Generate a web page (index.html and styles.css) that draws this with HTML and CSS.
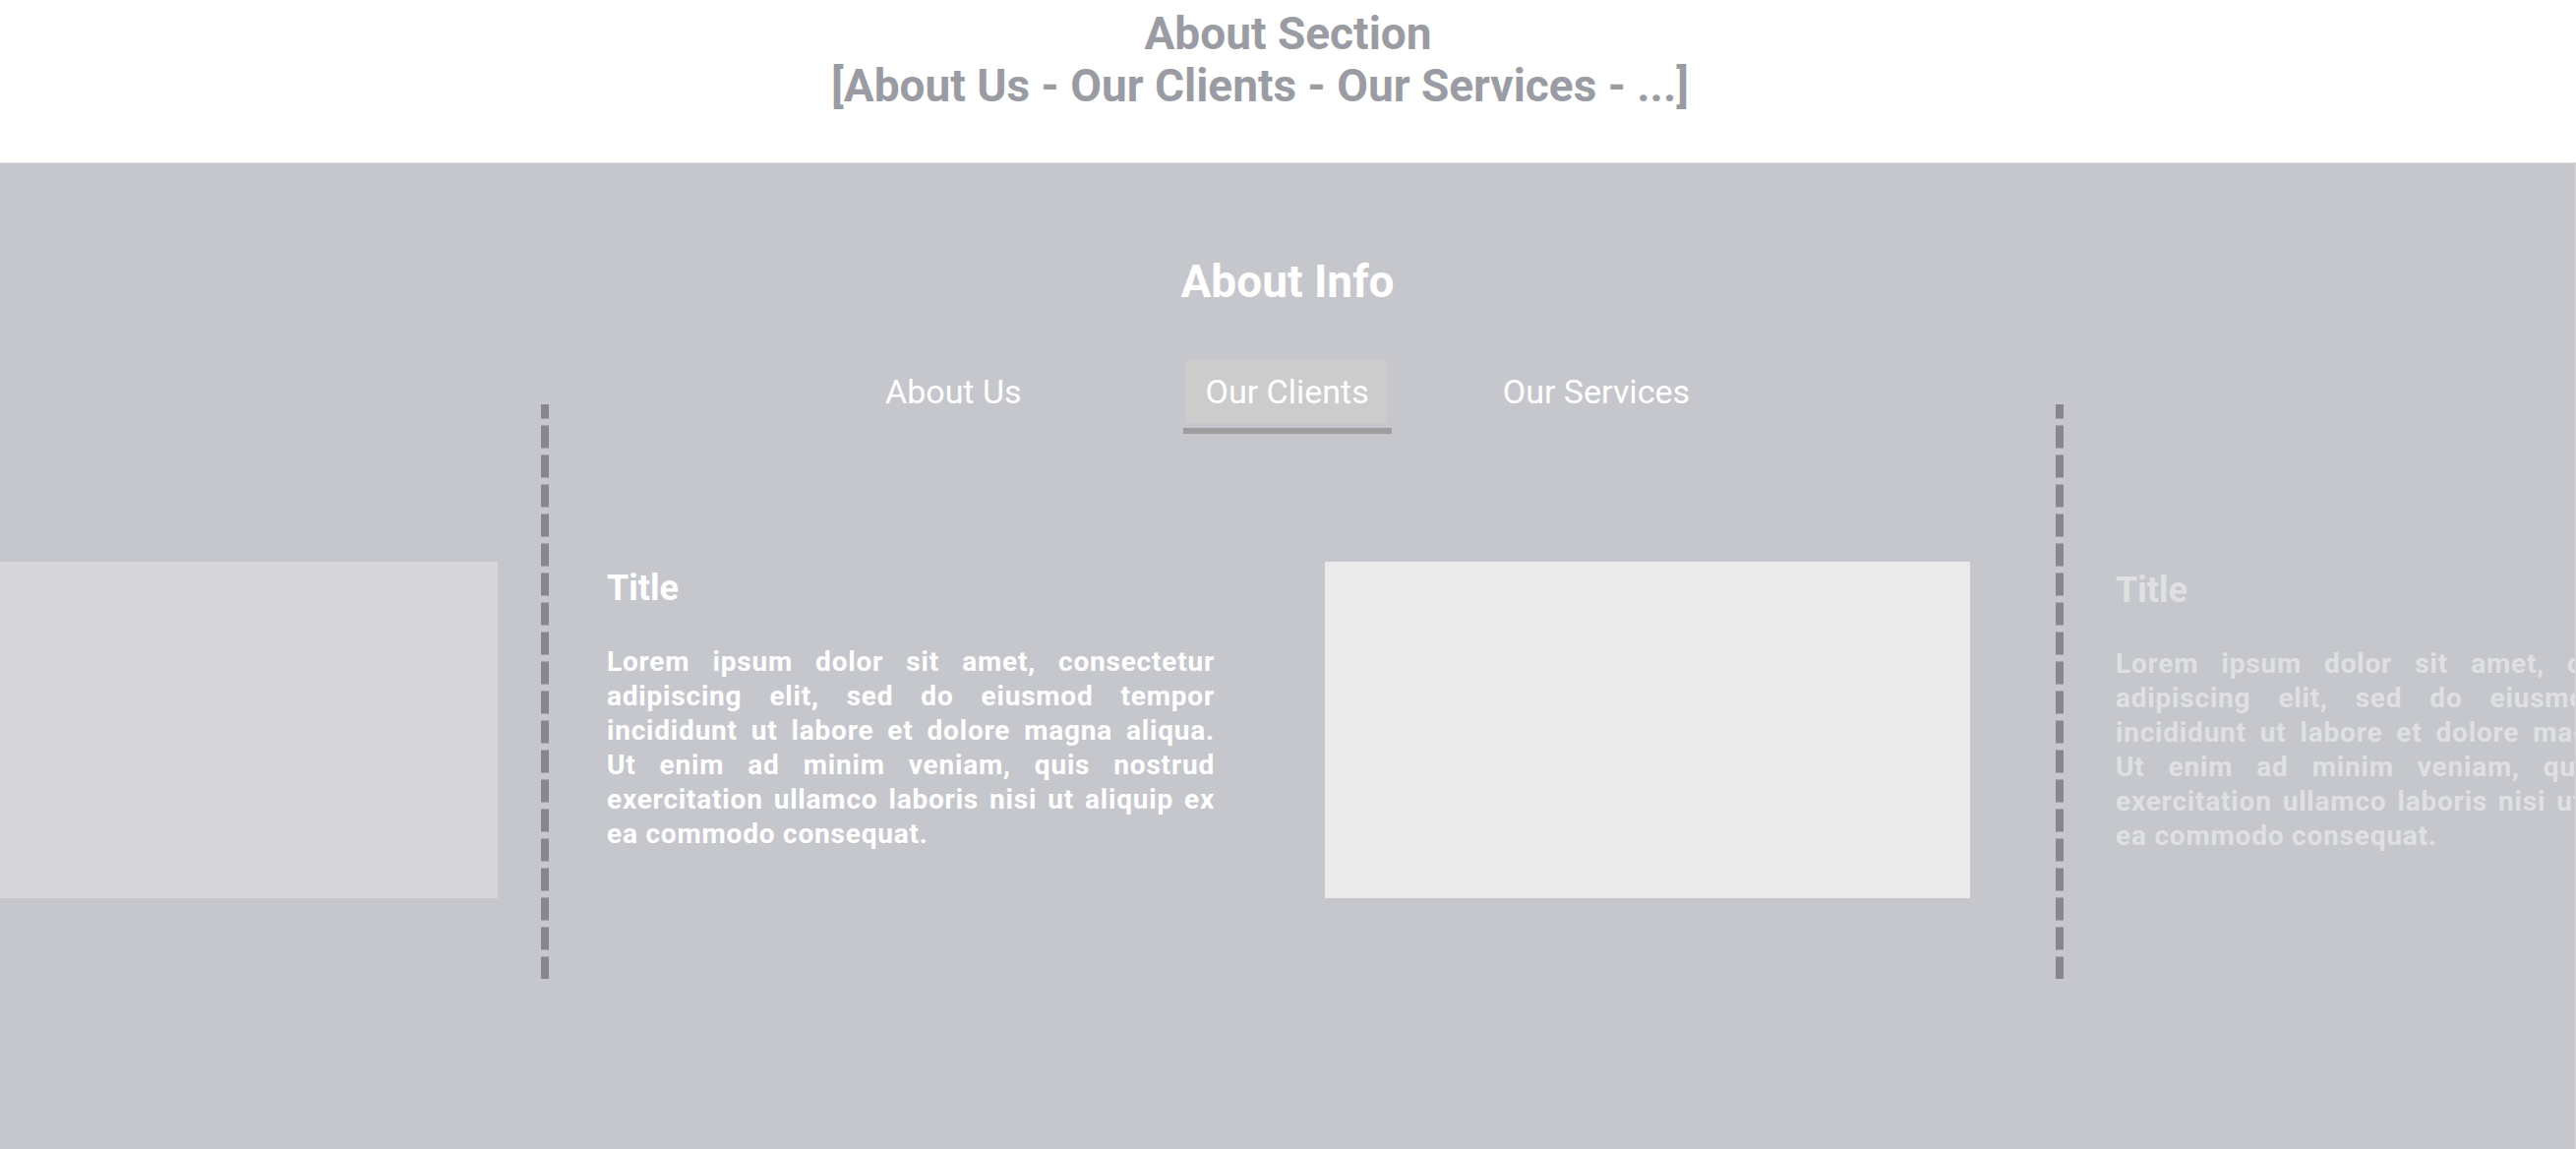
FILE: index.html
```html
<!DOCTYPE html>
<html lang="en">
<head>
<meta charset="utf-8">
<title>About Section</title>
<link rel="stylesheet" href="styles.css">
</head>
<body>
<header class="page-head">
  <h1 class="page-title"><span class="title-line">About Section</span><span class="title-line title-sub">[About Us - Our Clients - Our Services - ...]</span></h1>
</header>
<section class="about">
  <h2 class="about-title">About Info</h2>
  <nav class="tabs">
    <a class="tab tab-first">About Us</a>
    <a class="tab tab-active">Our Clients</a>
    <a class="tab">Our Services</a>
  </nav>
  <div class="carousel">
    <div class="track">
      <article class="slide slide-faded">
        <div class="slide-text">
          <h3 class="slide-title">Title</h3>
          <p class="slide-body">Lorem ipsum dolor sit amet, consectetur adipiscing elit, sed do eiusmod tempor incididunt ut labore et dolore magna aliqua. Ut enim ad minim veniam, quis nostrud exercitation ullamco laboris nisi ut aliquip ex ea commodo consequat.</p>
        </div>
        <div class="slide-image"></div>
      </article>
      <div class="divider divider-a"></div>
      <article class="slide">
        <div class="slide-text">
          <h3 class="slide-title">Title</h3>
          <p class="slide-body">Lorem ipsum dolor sit amet, consectetur adipiscing elit, sed do eiusmod tempor incididunt ut labore et dolore magna aliqua. Ut enim ad minim veniam, quis nostrud exercitation ullamco laboris nisi ut aliquip ex ea commodo consequat.</p>
        </div>
        <div class="slide-image"></div>
      </article>
      <div class="divider divider-b"></div>
      <article class="slide slide-faded slide-next">
        <div class="slide-text">
          <h3 class="slide-title">Title</h3>
          <p class="slide-body">Lorem ipsum dolor sit amet, consectetur adipiscing elit, sed do eiusmod tempor incididunt ut labore et dolore magna aliqua. Ut enim ad minim veniam, quis nostrud exercitation ullamco laboris nisi ut aliquip ex ea commodo consequat.</p>
        </div>
        <div class="slide-image"></div>
      </article>
    </div>
  </div>
</section>
</body>
</html>
```

FILE: styles.css
```css
* { box-sizing: border-box; }

html, body {
  margin: 0;
  padding: 0;
  height: 100%;
}

body {
  font-family: Roboto, "Liberation Sans", Arial, sans-serif;
  background: #ffffff;
  overflow: hidden;
}

.page-head {
  height: 165px;
  padding-top: 8px;
  text-align: center;
}

.page-title {
  margin: 0;
  font-size: 46px;
  line-height: 53px;
  font-weight: 700;
  color: #9b9ca3;
}

.title-line { display: block; }
.title-sub { padding-right: 57px; }

.about {
  height: calc(100vh - 165px);
  background: #c6c7cc;
  border-top: 1px solid #e1e1e4;
  border-right: 1px solid #d3d3d7;
  padding-top: 94px;
  overflow: hidden;
}

.about-title {
  margin: 0;
  text-align: center;
  font-size: 46px;
  line-height: 52px;
  font-weight: 700;
  color: #ffffff;
}

.tabs {
  display: flex;
  justify-content: center;
  margin-top: 54px;
}

.tab {
  position: relative;
  display: block;
  height: 64px;
  padding: 0 22px;
  font-size: 34px;
  line-height: 64px;
  font-weight: 400;
  color: #ffffff;
  cursor: pointer;
  white-space: nowrap;
}

.tab-first { margin-right: 144px; }

.tab-active {
  margin-right: 96px;
  padding: 0 18px 0 21px;
  background: #cccccc;
}

.tab-active::after {
  content: "";
  position: absolute;
  left: -2px;
  right: -5px;
  top: calc(100% + 5px);
  height: 6px;
  background: #9e9e9e;
}

.carousel {
  margin-top: -19px;
  overflow: hidden;
}

.track {
  display: flex;
  align-items: flex-start;
  width: max-content;
  margin-left: -880px;
}

.slide {
  display: flex;
  align-items: flex-start;
  gap: 112px;
  margin-top: 160px;
}

.slide-faded { opacity: 0.45; }
.slide-next { margin-top: 162px; }

.slide-text {
  width: 618px;
  color: #ffffff;
}

.slide-title {
  margin: 6px 0 0 0;
  font-size: 36px;
  line-height: 42px;
  font-weight: 700;
}

.slide-body {
  margin: 36px 0 0 0;
  font-size: 28px;
  line-height: 35px;
  font-weight: 700;
  letter-spacing: 0.8px;
  text-align: justify;
}

.slide-image {
  width: 656px;
  height: 342px;
  background: #eaeaea;
}

.divider {
  width: 8px;
  height: 584px;
  background-image: repeating-linear-gradient(to bottom, #868590 0, #868590 22.7px, transparent 22.7px, transparent 30px);
  background-position: 0 -8.5px;
}

.divider-a { margin: 0 59px 0 44px; }
.divider-b { margin: 0 53px 0 87px; }
```
